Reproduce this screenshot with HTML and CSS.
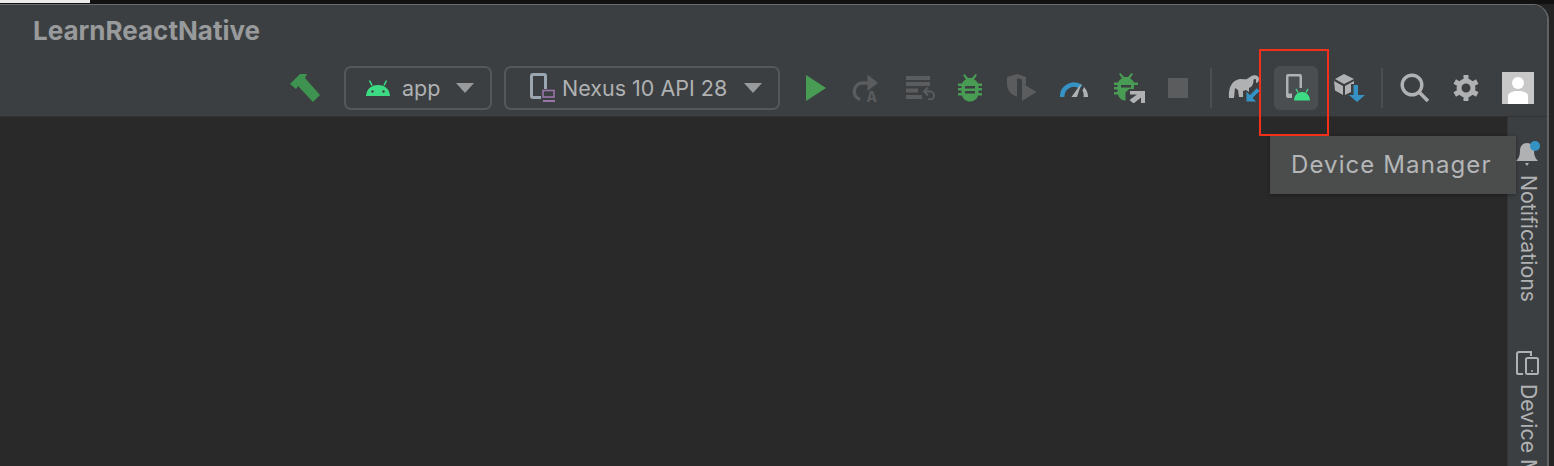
FILE: index.html
```html
<!DOCTYPE html>
<html lang="en">
<head>
  <meta charset="UTF-8" />
  <title>LearnReactNative</title>
  <link rel="stylesheet" href="styles.css">
</head>
<body>
  <div class="top-strip"><div class="top-strip-light"></div></div>
  <div class="window">
    <header class="header">
      <div class="title">LearnReactNative</div>
      <div class="toolbar">
        <svg class="icon hammer" width="32" height="30" viewBox="0 0 32 30"><path d="M1 11 L11 1 L18 1 L16 5 L31 22 L24 29 L9 13 L7 16 Z" fill="#3f9350"/></svg>

        <div class="combo combo-app">
          <svg width="26" height="18" viewBox="0 0 26 18"><path d="M1 17 C1.500 10 6 6 13 6 C20 6 24.500 10 25 17 Z" fill="#3ddc84"/><path d="M7 6.500 L4.500 1.500 M19 6.500 L21.500 1.500" stroke="#3ddc84" stroke-width="1.600"/><circle cx="7.500" cy="12.500" r="1.200" fill="#3c3f41"/><circle cx="18.500" cy="12.500" r="1.200" fill="#3c3f41"/></svg>
          <span class="combo-label">app</span>
          <span class="arrow"></span>
        </div>

        <div class="combo combo-device">
          <svg width="26" height="30" viewBox="0 0 26 30"><rect x="1.500" y="1.500" width="14" height="23" rx="1.500" fill="none" stroke="#9aa7b0" stroke-width="3"/><rect x="11" y="16" width="15" height="14" fill="#3c3f41"/><rect x="13" y="17.500" width="11" height="6.500" fill="none" stroke="#9876aa" stroke-width="1.600"/><rect x="13" y="27" width="12" height="2" fill="#9876aa"/></svg>
          <span class="combo-label">Nexus 10 API 28</span>
          <span class="arrow"></span>
        </div>

        <div class="icons">
          <div class="slot"><svg width="20" height="26" viewBox="0 0 20 26"><path d="M0 0 L20 13 L0 26 Z" fill="#499c54"/></svg></div>
          <div class="slot nudge-more"><svg width="26" height="34" viewBox="0 -3 26 34"><path d="M18 9 H10 A8.500 8.500 0 0 0 8 25.500" fill="none" stroke="#5a5c5e" stroke-width="3.400"/><path d="M15.500 0.500 L26 9 L15.500 17 Z" fill="#5a5c5e"/><text x="14.500" y="27.500" class="run-a">A</text></svg></div>
          <div class="slot"><svg width="29" height="24" viewBox="0 0 29 24"><path d="M0 0 H24 V4 H0 Z M0 6 H24 V10 H0 Z M0 12.500 H12 V16.500 H0 Z M0 19 H16 V23 H0 Z" fill="#5a5c5e"/><path d="M18 15.500 H24 A4 4 0 0 1 24 23.500 H22 M22 11.500 L18 15.500 L22 19.500" fill="none" stroke="#5a5c5e" stroke-width="1.800"/></svg></div>
          <div class="slot nudge"><svg width="24" height="28" viewBox="0 0 24 28"><path d="M5 1 L6.500 0 L10 4 H14 L17.500 0 L19 1 L16 5.500 C18 6.500 19.500 8 20 9.500 H24 V12 H20.500 V14 H24 V16.500 H20.500 V19 H24 V21.500 H20 C19 25 16 27.500 12 27.500 C8 27.500 5 25 4 21.500 H0 V19 H3.500 V16.500 H0 V14 H3.500 V12 H0 V9.500 H4 C4.500 8 6 6.500 8 5.500 Z" fill="#499c54"/><path d="M7 12 H17 V14.500 H7 Z M7 17 H17 V19.500 H7 Z" fill="#3c3f41"/></svg></div>
          <div class="slot nudge"><svg width="30" height="27" viewBox="0 0 30 27"><path d="M0 3 L10 0 L19 3 V11 L15 9 V5.500 L10 4 V22.500 C4 21 0 16 0 10 Z" fill="#5a5c5e"/><path d="M15 9 L29.500 18 L15 27 Z" fill="#5a5c5e"/></svg></div>
          <div class="slot nudge"><svg width="28" height="18" viewBox="0 0 28 18"><path d="M2.300 18 A11.700 11.700 0 0 1 21 8" fill="none" stroke="#3592c4" stroke-width="4.600"/><path d="M24 8 A14 14 0 0 1 28 18 H23.500 A10 10 0 0 0 22.500 11.500 Z" fill="#afb1b3"/><path d="M11.500 18 L21.500 4 L17 18 Z" fill="#afb1b3"/></svg></div>
          <div class="slot nudge-right"><svg width="32" height="30" viewBox="0 0 32 30"><path d="M5 1 L6.500 0 L10 4 H14 L17.500 0 L19 1 L16 5.500 C18 6.500 19.500 8 20 9.500 H24 V12 H20 V16 H15 L11.500 19.500 V27.500 C7.500 27.500 5 25 4 21.500 H0 V19 H3.500 V16.500 H0 V14 H3.500 V12 H0 V9.500 H4 C4.500 8 6 6.500 8 5.500 Z" fill="#499c54"/><path d="M7 12 H17 V14.500 H7 Z" fill="#3c3f41"/><path d="M16 18 H31 V30 H27 V24.500 L19.500 30.500 L15.500 27 L23 21.500 H16 Z" fill="#afb1b3"/></svg></div>
          <div class="slot"><span class="stop"></span></div>
        </div>

        <span class="sep sep-left"></span>

        <div class="slot gradle">
          <svg width="32" height="30" viewBox="0 0 32 30"><path d="M1 25 C0 15 4 7 12 6 C15 5.600 17 7 19 6 C21 5 23 3 25 2.500 C28 1.500 31 3 31 6 C31 8.500 29.500 10 28 10 L28 7 C28 5.500 25.500 5.500 25.500 7.500 C25.500 11 24 14 21 15 V19 L18 17 L15 18 V24 H11 L10 17 L7 15 L6 25 Z" fill="#afb1b3"/><path d="M18 18 L22 21.500 L29 14.500 L32 18 L25 25 L29 29 H18 Z" fill="#3592c4" stroke="#3c3f41" stroke-width="1"/></svg>
        </div>

        <div class="device-btn">
          <svg width="24" height="27" viewBox="0 0 24 27"><path d="M0 2 A2 2 0 0 1 2 0 H14 A2 2 0 0 1 16 2 V14 H13.500 V2.500 H2.500 V19.500 H6 V24 H2 A2 2 0 0 1 0 22 Z" fill="#afb1b3"/><path d="M8 26.500 C8.300 21 11.500 18 16 18 C20.500 18 23.700 21 24 26.500 Z" fill="#3ddc84"/><path d="M12 18.500 L10 15 M20 18.500 L22 15" stroke="#3ddc84" stroke-width="1.400"/></svg>
        </div>

        <div class="slot box">
          <svg width="32" height="28" viewBox="0 0 32 28"><path d="M10 0 L20 5 L10 10 L1 5 Z" fill="#afb1b3"/><path d="M0 7 L9 12 V21 L1 16.500 Z M11 12 L20 7 V10 H17 V18 L11 21 Z" fill="#afb1b3"/><path d="M19.500 11 H24 V21 H31 L23 28 L15 21 H19.500 Z" fill="#3592c4"/></svg>
        </div>

        <span class="sep sep-right"></span>

        <div class="slot search">
          <svg width="29" height="29" viewBox="0 0 29 29"><circle cx="12" cy="12" r="9.800" fill="none" stroke="#afb1b3" stroke-width="3.400"/><path d="M19 19 L28 28" stroke="#afb1b3" stroke-width="3.600"/></svg>
        </div>

        <div class="slot">
          <svg width="26" height="26" viewBox="0 0 26 26"><circle cx="13" cy="13" r="7" fill="none" stroke="#afb1b3" stroke-width="5"/><g stroke="#afb1b3" stroke-width="5"><path d="M13 0 V5 M13 21 V26"/><path d="M13 0 V5 M13 21 V26" transform="rotate(60 13 13)"/><path d="M13 0 V5 M13 21 V26" transform="rotate(120 13 13)"/></g></svg>
        </div>

        <div class="avatar">
          <svg width="32" height="32" viewBox="0 0 32 32"><circle cx="16" cy="11" r="6" fill="#fff"/><path d="M6 32 V24 C6 21 10 19 16 19 C22 19 26 21 26 24 V32 Z" fill="#fff"/></svg>
        </div>
      </div>
    </header>

    <div class="main">
      <div class="editor"></div>
      <aside class="side-bar">
        <div class="side-item side-notifications">
          <svg width="24" height="26" viewBox="0 0 24 26"><path d="M0 20 C3 17 4 14 4 10 C4 5 7 2 11 2 C15 2 18 5 18 10 C18 14 19 17 22 20 Z" fill="#afb1b3"/><path d="M9 22 H13 L11 25 Z" fill="#afb1b3"/><circle cx="19" cy="5" r="5" fill="#3592c4"/></svg>
          <span class="side-label">Notifications</span>
        </div>
        <div class="side-item side-device">
          <svg width="23" height="26" viewBox="0 0 23 26"><path d="M7 24 H2 A1 1 0 0 1 1 23 V4 A2 2 0 0 1 3 2 H15 V6" fill="none" stroke="#afb1b3" stroke-width="2"/><rect x="10" y="8" width="12" height="16" rx="1.500" fill="none" stroke="#afb1b3" stroke-width="2"/><circle cx="16" cy="21" r="1" fill="#afb1b3"/></svg>
          <span class="side-label">Device Manager</span>
        </div>
      </aside>
    </div>

    <div class="tooltip">Device Manager</div>
    <div class="highlight"></div>
  </div>
</body>
</html>
```

FILE: styles.css
```css
* {
  margin: 0;
  padding: 0;
  box-sizing: border-box;
}

html, body {
  width: 1554px;
  height: 466px;
  overflow: hidden;
  background: #242424;
  font-family: 'Inter', 'Liberation Sans', sans-serif;
}

.top-strip {
  height: 4px;
  background: #111;
}

.top-strip-light {
  width: 90px;
  height: 3px;
  background: #ececec;
}

.window {
  position: relative;
  height: 462px;
  width: 1549px;
  border-top-right-radius: 16px;
  overflow: hidden;
  background: #292929;
  border-top: 1px solid #6a6c6e;
  border-right: 2px solid #606365;
}

.header {
  height: 112px;
  background: #3c3f41;
  border-bottom: 1px solid #323232;
  display: flex;
  flex-direction: column;
}

.title {
  padding: 10px 0 0 33px;
  height: 61px;
  font-size: 26px;
  font-weight: 700;
  color: #989a9c;
}

.toolbar {
  display: flex;
  align-items: center;
  padding-left: 289px;
  height: 43px;
}

.icon {
  flex: none;
  display: block;
}

.hammer {
  margin-right: 23px;
}

.combo {
  flex: none;
  height: 44px;
  border: 2px solid #55585a;
  border-radius: 7px;
  display: flex;
  align-items: center;
  color: #afb1b3;
  font-size: 21.5px;
}

.combo-app {
  width: 148px;
  padding-left: 19px;
  margin-right: 12px;
}

.combo-device {
  width: 276px;
  padding-left: 24px;
}

.combo-label {
  margin-left: 11px;
}

.combo-device .combo-label {
  margin-left: 6px;
}

.arrow {
  width: 0;
  height: 0;
  border-left: 9px solid transparent;
  border-right: 9px solid transparent;
  border-top: 10px solid #989a9c;
  margin-left: auto;
  margin-right: 16px;
}

.icons {
  display: flex;
  align-items: center;
  margin-left: 10px;
}

.slot {
  flex: none;
  width: 52px;
  display: flex;
  align-items: center;
  justify-content: center;
}

/* the real toolbar spacing is a bit uneven */
.nudge svg {
  margin-right: 4px;
}

.nudge-more svg {
  margin-right: 6px;
}

.nudge-right svg {
  margin-left: 4px;
}

.run-a {
  font-size: 14px;
  font-weight: 700;
  fill: #5a5c5e;
}

.stop {
  width: 20px;
  height: 20px;
  margin-right: 4px;
  background: #5a5c5e;
}

.sep {
  flex: none;
  width: 2px;
  height: 40px;
  background: #4c4f51;
}

.sep-left {
  margin-left: 4px;
}

.gradle {
  margin-left: 6px;
}

.device-btn {
  flex: none;
  width: 44px;
  height: 44px;
  margin-left: 4px;
  padding-left: 12px;
  border-radius: 6px;
  background: #4b4e50;
  display: flex;
  align-items: center;
}

.box {
  margin-left: 6px;
}

.sep-right {
  margin-left: 5px;
}

.search {
  margin-left: 5px;
}

.avatar {
  flex: none;
  width: 32px;
  height: 32px;
  margin-left: 10px;
  background: #c8c8c8;
}

.main {
  display: flex;
  height: 349px;
}

.editor {
  flex: 1;
}

.side-bar {
  width: 40px;
  background: #3c3f41;
  border-left: 1px solid #333;
  padding-left: 8px;
  display: flex;
  flex-direction: column;
}

.side-item {
  flex: none;
  display: flex;
  flex-direction: column;
  align-items: flex-start;
  color: #afb1b3;
  font-size: 21.3px;
}

.side-notifications {
  padding-top: 24px;
  height: 233px;
}

.side-label {
  writing-mode: vertical-rl;
  white-space: nowrap;
  margin-top: 8px;
}

.tooltip {
  position: absolute;
  left: 1270px;
  top: 131px;
  width: 246px;
  height: 58px;
  background: #4b4d4d;
  color: #b4b6b8;
  font-size: 24px;
  letter-spacing: 1.1px;
  line-height: 58px;
  padding-left: 21px;
  box-shadow: 0 1px 4px rgba(0, 0, 0, 0.35);
}

.highlight {
  position: absolute;
  left: 1259px;
  top: 44px;
  width: 70px;
  height: 87px;
  border: 2px solid #f5301a;
}
```
